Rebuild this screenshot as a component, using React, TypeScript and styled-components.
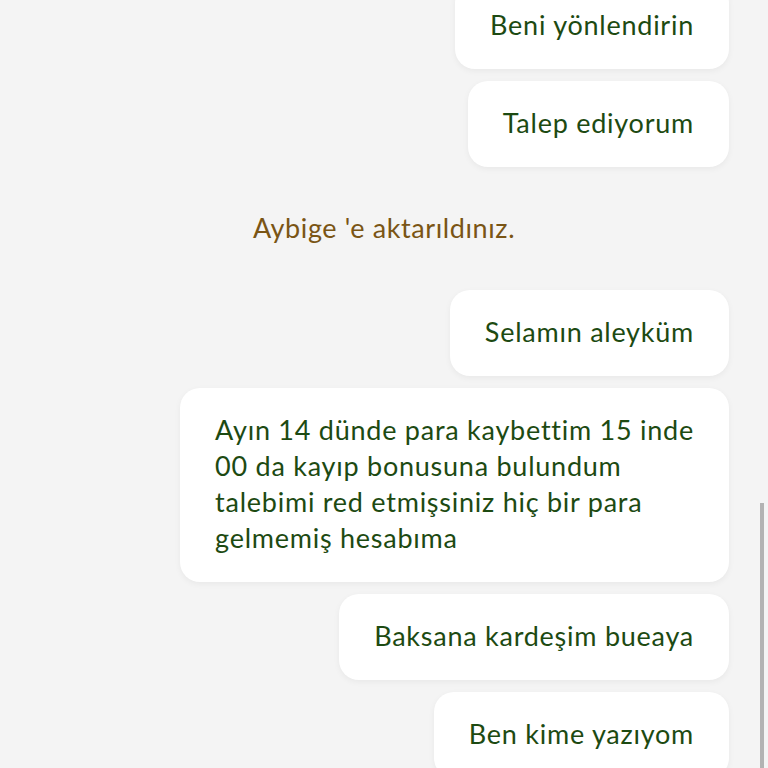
import React from "react";
import styled, { createGlobalStyle } from "styled-components";

const Global = createGlobalStyle`
  html, body { margin: 0; padding: 0; background: #f4f4f4; overflow: hidden; }
  body { font-family: Lato, "Noto Sans", sans-serif; }
`;

const Screen = styled.div`
  position: relative;
  width: 768px;
  height: 768px;
  overflow: hidden;
  background: #f4f4f4;
`;

const Thread = styled.div`
  display: flex;
  flex-direction: column;
  align-items: flex-end;
  gap: 12px;
  margin-top: -17px;
  padding: 0 39px 0 0;
`;

const Bubble = styled.div`
  box-sizing: border-box;
  max-width: 560px;
  background: #ffffff;
  border-radius: 20px;
  padding: 24px 35px 26px;
  box-shadow: 0 2px 6px rgba(0, 0, 0, 0.05);
  color: #1d4a12;
  font-size: 27px;
  letter-spacing: 0.75px;
  line-height: 36px;
  text-align: left;
`;

const SystemRow = styled.div`
  align-self: stretch;
  display: flex;
  justify-content: center;
  align-items: center;
  height: 99px;
  padding-bottom: 2px;
  box-sizing: border-box;
  margin-right: -39px;
  color: #7a5515;
  font-size: 27px;
  letter-spacing: 0.6px;
`;

const Scrollbar = styled.div`
  position: absolute;
  right: 4px;
  top: 503px;
  width: 4px;
  height: 265px;
  background: #b3b3b3;
`;

const messages = ["Beni yönlendirin", "Talep ediyorum"];

export default function App() {
  return (
    <Screen>
      <Global />
      <Thread>
        {messages.map((m) => (
          <Bubble key={m}>{m}</Bubble>
        ))}
        <SystemRow>Aybige 'e aktarıldınız.</SystemRow>
        <Bubble>Selamın aleyküm</Bubble>
        <Bubble>
          Ayın 14 dünde para kaybettim 15 inde
          <br />
          00 da kayıp bonusuna bulundum
          <br />
          talebimi red etmişsiniz hiç bir para
          <br />
          gelmemiş hesabıma
        </Bubble>
        <Bubble>Baksana kardeşim bueaya</Bubble>
        <Bubble>Ben kime yazıyom</Bubble>
      </Thread>
      <Scrollbar />
    </Screen>
  );
}
